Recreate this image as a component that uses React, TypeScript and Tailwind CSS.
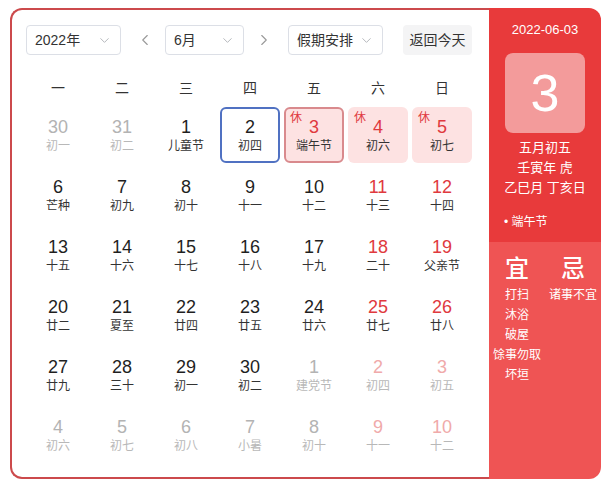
import { ChevronDown, ChevronLeft, ChevronRight } from "lucide-react";

type Day = {
  n: number;
  l: string;
  other?: boolean;
  rest?: boolean;
  today?: boolean;
  picked?: boolean;
};

const weekdays = ["一", "二", "三", "四", "五", "六", "日"];

const days: Day[] = [
  { n: 30, l: "初一", other: true },
  { n: 31, l: "初二", other: true },
  { n: 1, l: "儿童节" },
  { n: 2, l: "初四", picked: true },
  { n: 3, l: "端午节", rest: true, today: true },
  { n: 4, l: "初六", rest: true },
  { n: 5, l: "初七", rest: true },
  { n: 6, l: "芒种" },
  { n: 7, l: "初九" },
  { n: 8, l: "初十" },
  { n: 9, l: "十一" },
  { n: 10, l: "十二" },
  { n: 11, l: "十三" },
  { n: 12, l: "十四" },
  { n: 13, l: "十五" },
  { n: 14, l: "十六" },
  { n: 15, l: "十七" },
  { n: 16, l: "十八" },
  { n: 17, l: "十九" },
  { n: 18, l: "二十" },
  { n: 19, l: "父亲节" },
  { n: 20, l: "廿二" },
  { n: 21, l: "夏至" },
  { n: 22, l: "廿四" },
  { n: 23, l: "廿五" },
  { n: 24, l: "廿六" },
  { n: 25, l: "廿七" },
  { n: 26, l: "廿八" },
  { n: 27, l: "廿九" },
  { n: 28, l: "三十" },
  { n: 29, l: "初一" },
  { n: 30, l: "初二" },
  { n: 1, l: "建党节", other: true },
  { n: 2, l: "初四", other: true },
  { n: 3, l: "初五", other: true },
  { n: 4, l: "初六", other: true },
  { n: 5, l: "初七", other: true },
  { n: 6, l: "初八", other: true },
  { n: 7, l: "小暑", other: true },
  { n: 8, l: "初十", other: true },
  { n: 9, l: "十一", other: true },
  { n: 10, l: "十二", other: true },
];

const yi = ["打扫", "沐浴", "破屋", "馀事勿取", "坏垣"];

function Select({ label, w }: { label: string; w: string }) {
  return (
    <div
      className={`${w} flex h-[30px] items-center justify-between rounded-[4px] border border-[#dcdfe6] bg-white pl-[8px] pr-[8px] text-[14px] text-[#333]`}
    >
      <span>{label}</span>
      <ChevronDown size={15} strokeWidth={1.5} className="text-[#b0b3b8]" />
    </div>
  );
}

function Cell({ d, i }: { d: Day; i: number }) {
  const weekend = i % 7 >= 5;
  let num = "text-[#1f1f1f]";
  let lunar = "text-[#333]";
  if (d.other) {
    num = weekend ? "text-[#f0aaaa]" : "text-[#b3b3b3]";
    lunar = "text-[#b8b8b8]";
  } else if (weekend || d.rest) {
    num = "text-[#e0393e]";
  }
  let box = "border-2 border-transparent";
  if (d.picked) box = "border-2 border-[#5071c2] bg-white";
  if (d.rest) box = "border-2 border-transparent bg-[#fde2e2]";
  if (d.today) box = "border-2 border-[#d98a8d] bg-[#fde2e2]";
  return (
    <div
      className={`relative m-[2px] flex h-[56px] flex-col items-center justify-center rounded-[6px] ${box}`}
    >
      {d.rest && (
        <span className="absolute left-[4px] top-[2px] text-[12px] leading-[14px] text-[#e0393e]">
          休
        </span>
      )}
      <span className={`text-[18px] leading-[22px] ${num}`}>{d.n}</span>
      <span className={`text-[12px] leading-[16px] ${lunar}`}>{d.l}</span>
    </div>
  );
}

export default function App() {
  return (
    <div
      className="bg-white pl-[10px] pt-[8px]"
      style={{ fontFamily: '"Liberation Sans", "Noto Sans CJK SC", sans-serif' }}
    >
      <div className="flex h-[471px] w-[591px]">
        <div className="h-full w-[479px] rounded-l-[12px] border-2 border-r-0 border-[#cc4a4c] pl-[14px] pt-[15px]">
          <div className="flex h-[30px] items-center">
            <Select label="2022年" w="w-[95px]" />
            <div className="ml-[14px] flex w-[20px] justify-center text-[#999]">
              <ChevronLeft size={18} strokeWidth={1.5} />
            </div>
            <div className="ml-[10px]">
              <Select label="6月" w="w-[79px]" />
            </div>
            <div className="ml-[10px] flex w-[20px] justify-center text-[#999]">
              <ChevronRight size={18} strokeWidth={1.5} />
            </div>
            <div className="ml-[14px]">
              <Select label="假期安排" w="w-[95px]" />
            </div>
            <div className="ml-[20px] flex h-[30px] w-[69px] items-center justify-center rounded-[4px] bg-[#f4f4f5] text-[14px] text-[#333]">
              返回今天
            </div>
          </div>
          <div className="mt-[17px] grid h-[33px] w-[448px] grid-cols-7 items-center text-center text-[14px] text-[#333]">
            {weekdays.map((w) => (
              <span key={w}>{w}</span>
            ))}
          </div>
          <div className="grid w-[448px] grid-cols-7">
            {days.map((d, i) => (
              <Cell key={i} d={d} i={i} />
            ))}
          </div>
        </div>
        <div className="flex h-full w-[112px] flex-col overflow-hidden rounded-r-[12px] text-white">
          <div className="flex h-[234px] flex-col items-center bg-[#e83a3b] pt-[13px]">
            <div className="text-[13px] leading-[18px]">2022-06-03</div>
            <div className="mt-[14px] flex h-[80px] w-[80px] items-center justify-center rounded-[8px] bg-[#f39b9b] text-[52px] leading-none">
              3
            </div>
            <div className="mt-[5px] text-[13px] leading-[20px]">五月初五</div>
            <div className="text-[13px] leading-[20px]">壬寅年 虎</div>
            <div className="text-[13px] leading-[20px]">乙巳月 丁亥日</div>
            <div className="mt-[15px] w-full pl-[15px] text-[12px] leading-[18px]">
              • 端午节
            </div>
          </div>
          <div className="flex flex-1 bg-[#ef5454] pt-[13px]">
            <div className="flex w-[56px] flex-col items-center">
              <div className="text-[24px] font-medium leading-[28px]">宜</div>
              <div className="mt-[2px] flex flex-col items-center text-[12px] leading-[20px]">
                {yi.map((t) => (
                  <span key={t} className="whitespace-nowrap">{t}</span>
                ))}
              </div>
            </div>
            <div className="flex w-[56px] flex-col items-center">
              <div className="text-[24px] font-medium leading-[28px]">忌</div>
              <div className="mt-[2px] whitespace-nowrap text-[12px] leading-[20px]">诸事不宜</div>
            </div>
          </div>
        </div>
      </div>
    </div>
  );
}
